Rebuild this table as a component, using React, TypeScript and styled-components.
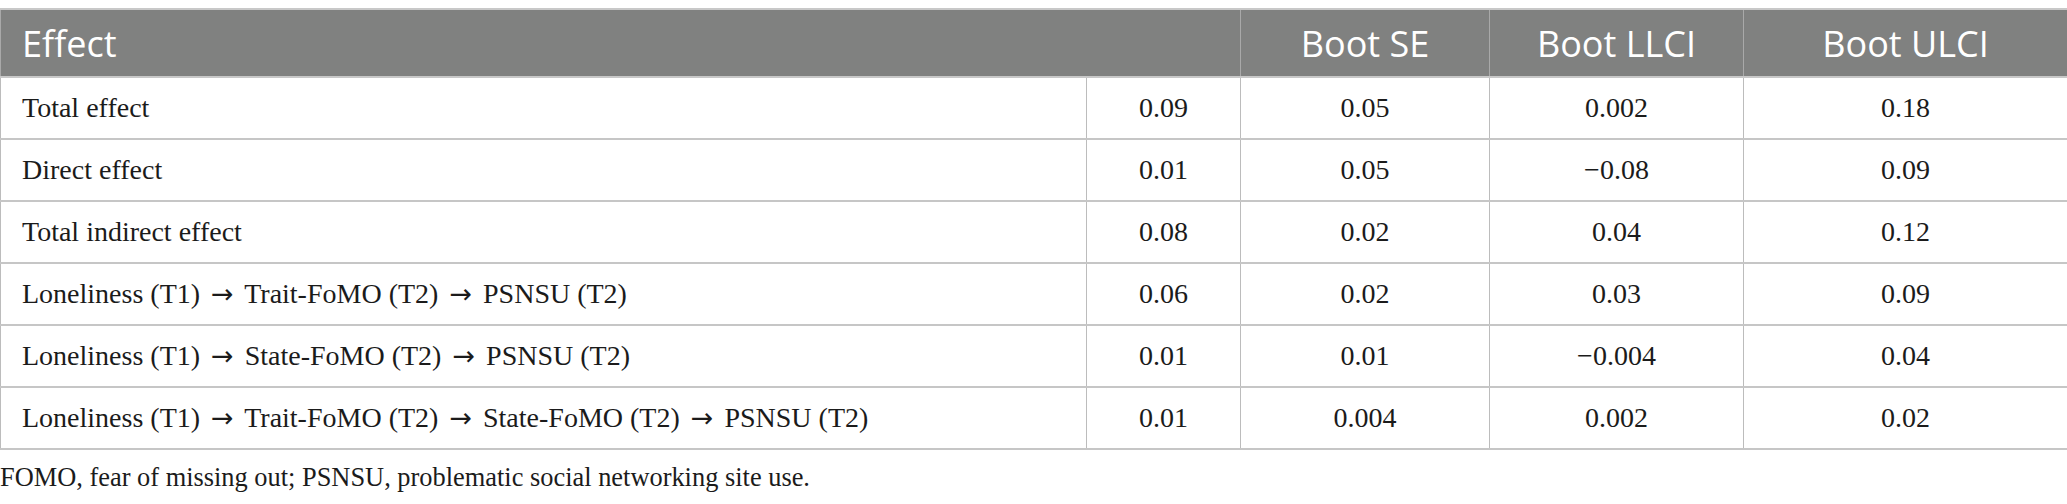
import React from "react";
import styled, { createGlobalStyle } from "styled-components";

const Global = createGlobalStyle`
  html, body { margin: 0; padding: 0; background: #ffffff; }
  body { padding-top: 8px; }
`;

const Table = styled.table`
  width: 2067px;
  border-collapse: collapse;
  table-layout: fixed;
  font-family: "Liberation Serif", "Times New Roman", serif;
  color: #1b1b1b;
`;

const HeadRow = styled.tr`
  height: 68px;
  background: #808180;
`;

const HeadCell = styled.th<{ $left?: boolean }>`
  font-family: "Open Sans", Lato, sans-serif;
  font-weight: 400;
  font-size: 36px;
  color: #ffffff;
  text-align: ${(p) => (p.$left ? "left" : "center")};
  padding: 0 0 0 ${(p) => (p.$left ? "21px" : "0")};
  border-top: 2px solid #c8c8c8;
  border-left: 1px solid #a9a9a9;
  border-right: 1px solid #a9a9a9;
  border-bottom: 2px solid #c8c8c8;
  vertical-align: middle;
`;

const Row = styled.tr`
  height: 62px;
`;

const Cell = styled.td<{ $left?: boolean }>`
  font-size: 28px;
  text-align: ${(p) => (p.$left ? "left" : "center")};
  padding: 0 0 0 ${(p) => (p.$left ? "21px" : "0")};
  border-top: 2px solid #c6c6c6;
  border-bottom: 2px solid #c6c6c6;
  border-left: 1px solid #bcbcbc;
  border-right: 1px solid #bcbcbc;
  vertical-align: middle;
  white-space: nowrap;
`;

const Arrow = styled.span`
  font-family: "DejaVu Sans", sans-serif;
  font-size: 27px;
  margin: 0 4px;
`;

const Note = styled.p`
  margin: 12px 0 0 0;
  font-family: "Liberation Serif", "Times New Roman", serif;
  font-size: 26.4px;
  color: #1b1b1b;
  line-height: 30px;
`;

const rows: [string, string, string, string, string][] = [
  ["Total effect", "0.09", "0.05", "0.002", "0.18"],
  ["Direct effect", "0.01", "0.05", "\u22120.08", "0.09"],
  ["Total indirect effect", "0.08", "0.02", "0.04", "0.12"],
  ["Loneliness (T1) \u2192 Trait-FoMO (T2) \u2192 PSNSU (T2)", "0.06", "0.02", "0.03", "0.09"],
  ["Loneliness (T1) \u2192 State-FoMO (T2) \u2192 PSNSU (T2)", "0.01", "0.01", "\u22120.004", "0.04"],
  [
    "Loneliness (T1) \u2192 Trait-FoMO (T2) \u2192 State-FoMO (T2) \u2192 PSNSU (T2)",
    "0.01",
    "0.004",
    "0.002",
    "0.02",
  ],
];

function Label({ text }: { text: string }) {
  const parts = text.split("\u2192");
  return (
    <>
      {parts.map((p, i) => (
        <React.Fragment key={i}>
          {i > 0 && <Arrow>{"\u2192"}</Arrow>}
          {p}
        </React.Fragment>
      ))}
    </>
  );
}

export default function App() {
  return (
    <>
      <Global />
      <Table>
        <colgroup>
          <col style={{ width: 1086 }} />
          <col style={{ width: 154 }} />
          <col style={{ width: 249 }} />
          <col style={{ width: 254 }} />
          <col style={{ width: 324 }} />
        </colgroup>
        <thead>
          <HeadRow>
            <HeadCell $left colSpan={2}>
              Effect
            </HeadCell>
            <HeadCell>Boot SE</HeadCell>
            <HeadCell>Boot LLCI</HeadCell>
            <HeadCell>Boot ULCI</HeadCell>
          </HeadRow>
        </thead>
        <tbody>
          {rows.map((r, i) => (
            <Row key={i}>
              <Cell $left>
                <Label text={r[0]} />
              </Cell>
              <Cell>{r[1]}</Cell>
              <Cell>{r[2]}</Cell>
              <Cell>{r[3]}</Cell>
              <Cell>{r[4]}</Cell>
            </Row>
          ))}
        </tbody>
      </Table>
      <Note>FOMO, fear of missing out; PSNSU, problematic social networking site use.</Note>
    </>
  );
}
